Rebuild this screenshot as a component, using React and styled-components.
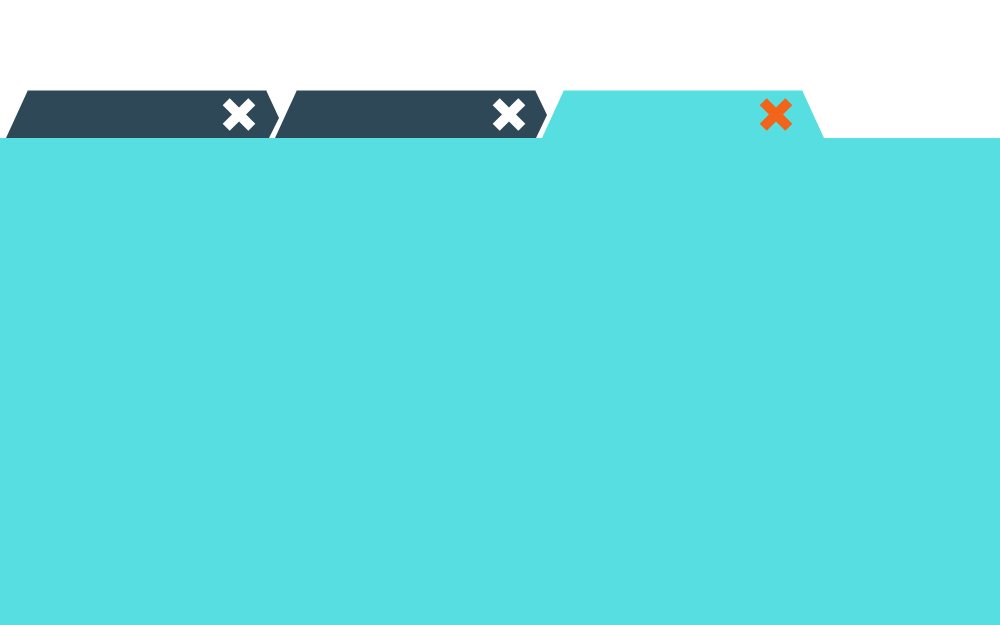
import React from 'react'
import styled, { createGlobalStyle } from 'styled-components'

const GlobalStyle = createGlobalStyle`
    body {
        margin: 0;
        background: #ffffff;
        font-family: "Liberation Sans", sans-serif;
    }
`

const Page = styled.div`
    display: flex;
    flex-direction: column;
    min-height: 100vh;
`

const TabBar = styled.div`
    display: flex;
    padding: 90px 5px 0;
`

const shapes = {
    first: 'polygon(23px 0, 261px 0, 274px 28px, 264px 100%, 1px 100%)',
    middle: 'polygon(22px 0, 260px 0, 272px 25px, 261px 100%, 0 100%)',
    active: 'polygon(22px 0, 260px 0, 100% 100%, 0 100%)'
}

const Tab = styled.div`
    display: flex;
    flex: none;
    align-items: center;
    box-sizing: border-box;
    width: 274px;
    height: 48px;
    padding-right: 23px;
    border-top: 1px solid #98a4ab;
    background: #2f4858;
    color: #ffffff;
    clip-path: ${props => shapes[props.$shape]};

    & + & {
        margin-left: -4px;
    }
`

const ActiveTab = styled(Tab)`
    width: 282px;
    padding-right: 31px;
    border-top-color: #abeeef;
    background: #56dee0;
    color: #f26419;

    ${Tab} + && {
        margin-left: -7px;
    }
`

const TabButton = styled.button`
    flex: 1;
    align-self: stretch;
    padding: 0;
    border: 0;
    background: transparent;
    cursor: pointer;
`

const CloseButton = styled.button`
    display: flex;
    padding: 0;
    border: 0;
    background: transparent;
    color: inherit;
    cursor: pointer;
`

const Panel = styled.main`
    flex: 1;
    background: #56dee0;
`

const CloseIcon = () => (
    <svg width="34" height="33" viewBox="-17 -16.5 34 33" fill="currentColor" aria-hidden="true">
        <path d="M-9.3-16.3 0-7 9.3-16.3 16.3-9.3 7 0 16.3 9.3 9.3 16.3 0 7-9.3 16.3-16.3 9.3-7 0-16.3-9.3Z" />
    </svg>
)

export default class App extends React.Component {
    state = {
        tabs: [1, 2, 3],
        active: 3
    }

    selectTab = (id) => {
        this.setState({active: id})
    }

    closeTab = (id) => {
        const tabs = this.state.tabs.filter(tab => tab !== id)
        const active = this.state.active === id ? tabs[tabs.length - 1] : this.state.active
        this.setState({tabs, active})
    }

    render() {
        const { tabs, active } = this.state

        return (
            <Page>
                <GlobalStyle />
                <TabBar>
                    {tabs.map((id, index) => {
                        const isActive = id === active
                        const Item = isActive ? ActiveTab : Tab
                        const shape = index === 0 ? 'first' : 'middle'

                        return (
                            <Item key={id} $shape={isActive ? 'active' : shape}>
                                <TabButton aria-label={`Tab ${id}`} aria-pressed={isActive} onClick={() => this.selectTab(id)} />
                                <CloseButton aria-label={`Close tab ${id}`} onClick={() => this.closeTab(id)}>
                                    <CloseIcon />
                                </CloseButton>
                            </Item>
                        )
                    })}
                </TabBar>
                <Panel />
            </Page>
        )
    }
}
